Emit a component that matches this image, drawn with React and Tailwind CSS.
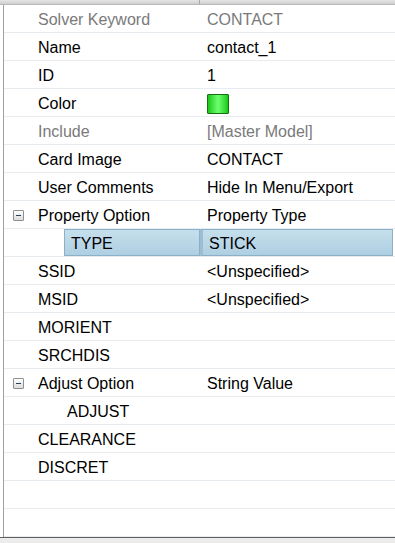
const rows = [
  { label: "Solver Keyword", value: "CONTACT", muted: true },
  { label: "Name", value: "contact_1" },
  { label: "ID", value: "1" },
  { label: "Color", swatch: true },
  { label: "Include", value: "[Master Model]", muted: true },
  { label: "Card Image", value: "CONTACT" },
  { label: "User Comments", value: "Hide In Menu/Export" },
  { label: "Property Option", value: "Property Type", group: true },
  { label: "TYPE", value: "STICK", child: true, selected: true },
  { label: "SSID", value: "<Unspecified>" },
  { label: "MSID", value: "<Unspecified>" },
  { label: "MORIENT", value: "" },
  { label: "SRCHDIS", value: "" },
  { label: "Adjust Option", value: "String Value", group: true },
  { label: "ADJUST", value: "", child: true },
  { label: "CLEARANCE", value: "" },
  { label: "DISCRET", value: "" },
  { label: "", value: "" },
  { label: "", value: "" },
];

function MinusBox() {
  return (
    <div className="absolute left-[9px] top-[9px] w-[11px] h-[11px] border border-[#8e8f8f] rounded-[1px] bg-gradient-to-b from-white to-[#dcdcdc] flex items-center justify-center">
      <div className="w-[5px] h-[1px] bg-[#2b3d5c]" />
    </div>
  );
}

function Swatch() {
  return (
    <div className="w-[22px] h-[20px] rounded-[1px] border border-[#157015] bg-gradient-to-r from-[#10c810] via-[#6cff6c] to-[#10c810]" />
  );
}

function Row({ row }) {
  const text = row.muted ? "text-[#7a7a7a]" : "text-black";

  if (row.selected) {
    return (
      <div className="flex h-[28px] border-b border-[#e6ecf0]">
        <div className="w-[60px] shrink-0" />
        <div className="w-[136px] shrink-0 flex items-center pl-[6px] pt-[2px] border border-[#8cb0c8] bg-gradient-to-b from-[#c6dfec] to-[#aecfe2]">
          {row.label}
        </div>
        <div className="flex-1 flex items-center pl-[6px] pt-[2px] mr-[2px] border border-[#8cb0c8] border-l-[3px] border-l-[#9dbdd2] bg-gradient-to-b from-[#c6dfec] to-[#aecfe2]">
          {row.value}
        </div>
      </div>
    );
  }

  return (
    <div className={`relative flex h-[28px] border-b border-[#e6ecf0] ${text}`}>
      {row.group && <MinusBox />}
      <div className={`w-[196px] shrink-0 flex items-center pt-[2px] ${row.child ? "pl-[63px]" : "pl-[34px]"}`}>
        {row.label}
      </div>
      <div className="flex-1 flex items-center pl-[7px] pt-[2px]">
        {row.swatch ? <Swatch /> : row.value}
      </div>
    </div>
  );
}

export default function App() {
  return (
    <div
      className="w-[395px] h-[543px] bg-white flex flex-col overflow-hidden text-[16px] leading-none"
      style={{ fontFamily: '"Liberation Sans", Arial, sans-serif' }}
    >
      <div className="h-[5px] shrink-0 flex bg-gradient-to-b from-[#e4e4e4] to-[#cfcfcf] border-b border-[#b9b9b9]">
        <div className="w-[200px] border-r border-[#a8a8a8]" />
      </div>
      <div className="flex-1 ml-[3px] border-l border-[#a0a0a0] bg-white">
        {rows.map((row, i) => (
          <Row key={i} row={row} />
        ))}
      </div>
      <div className="h-[6px] shrink-0 border-t border-[#5f5f5f] bg-[#ececec]" />
    </div>
  );
}
